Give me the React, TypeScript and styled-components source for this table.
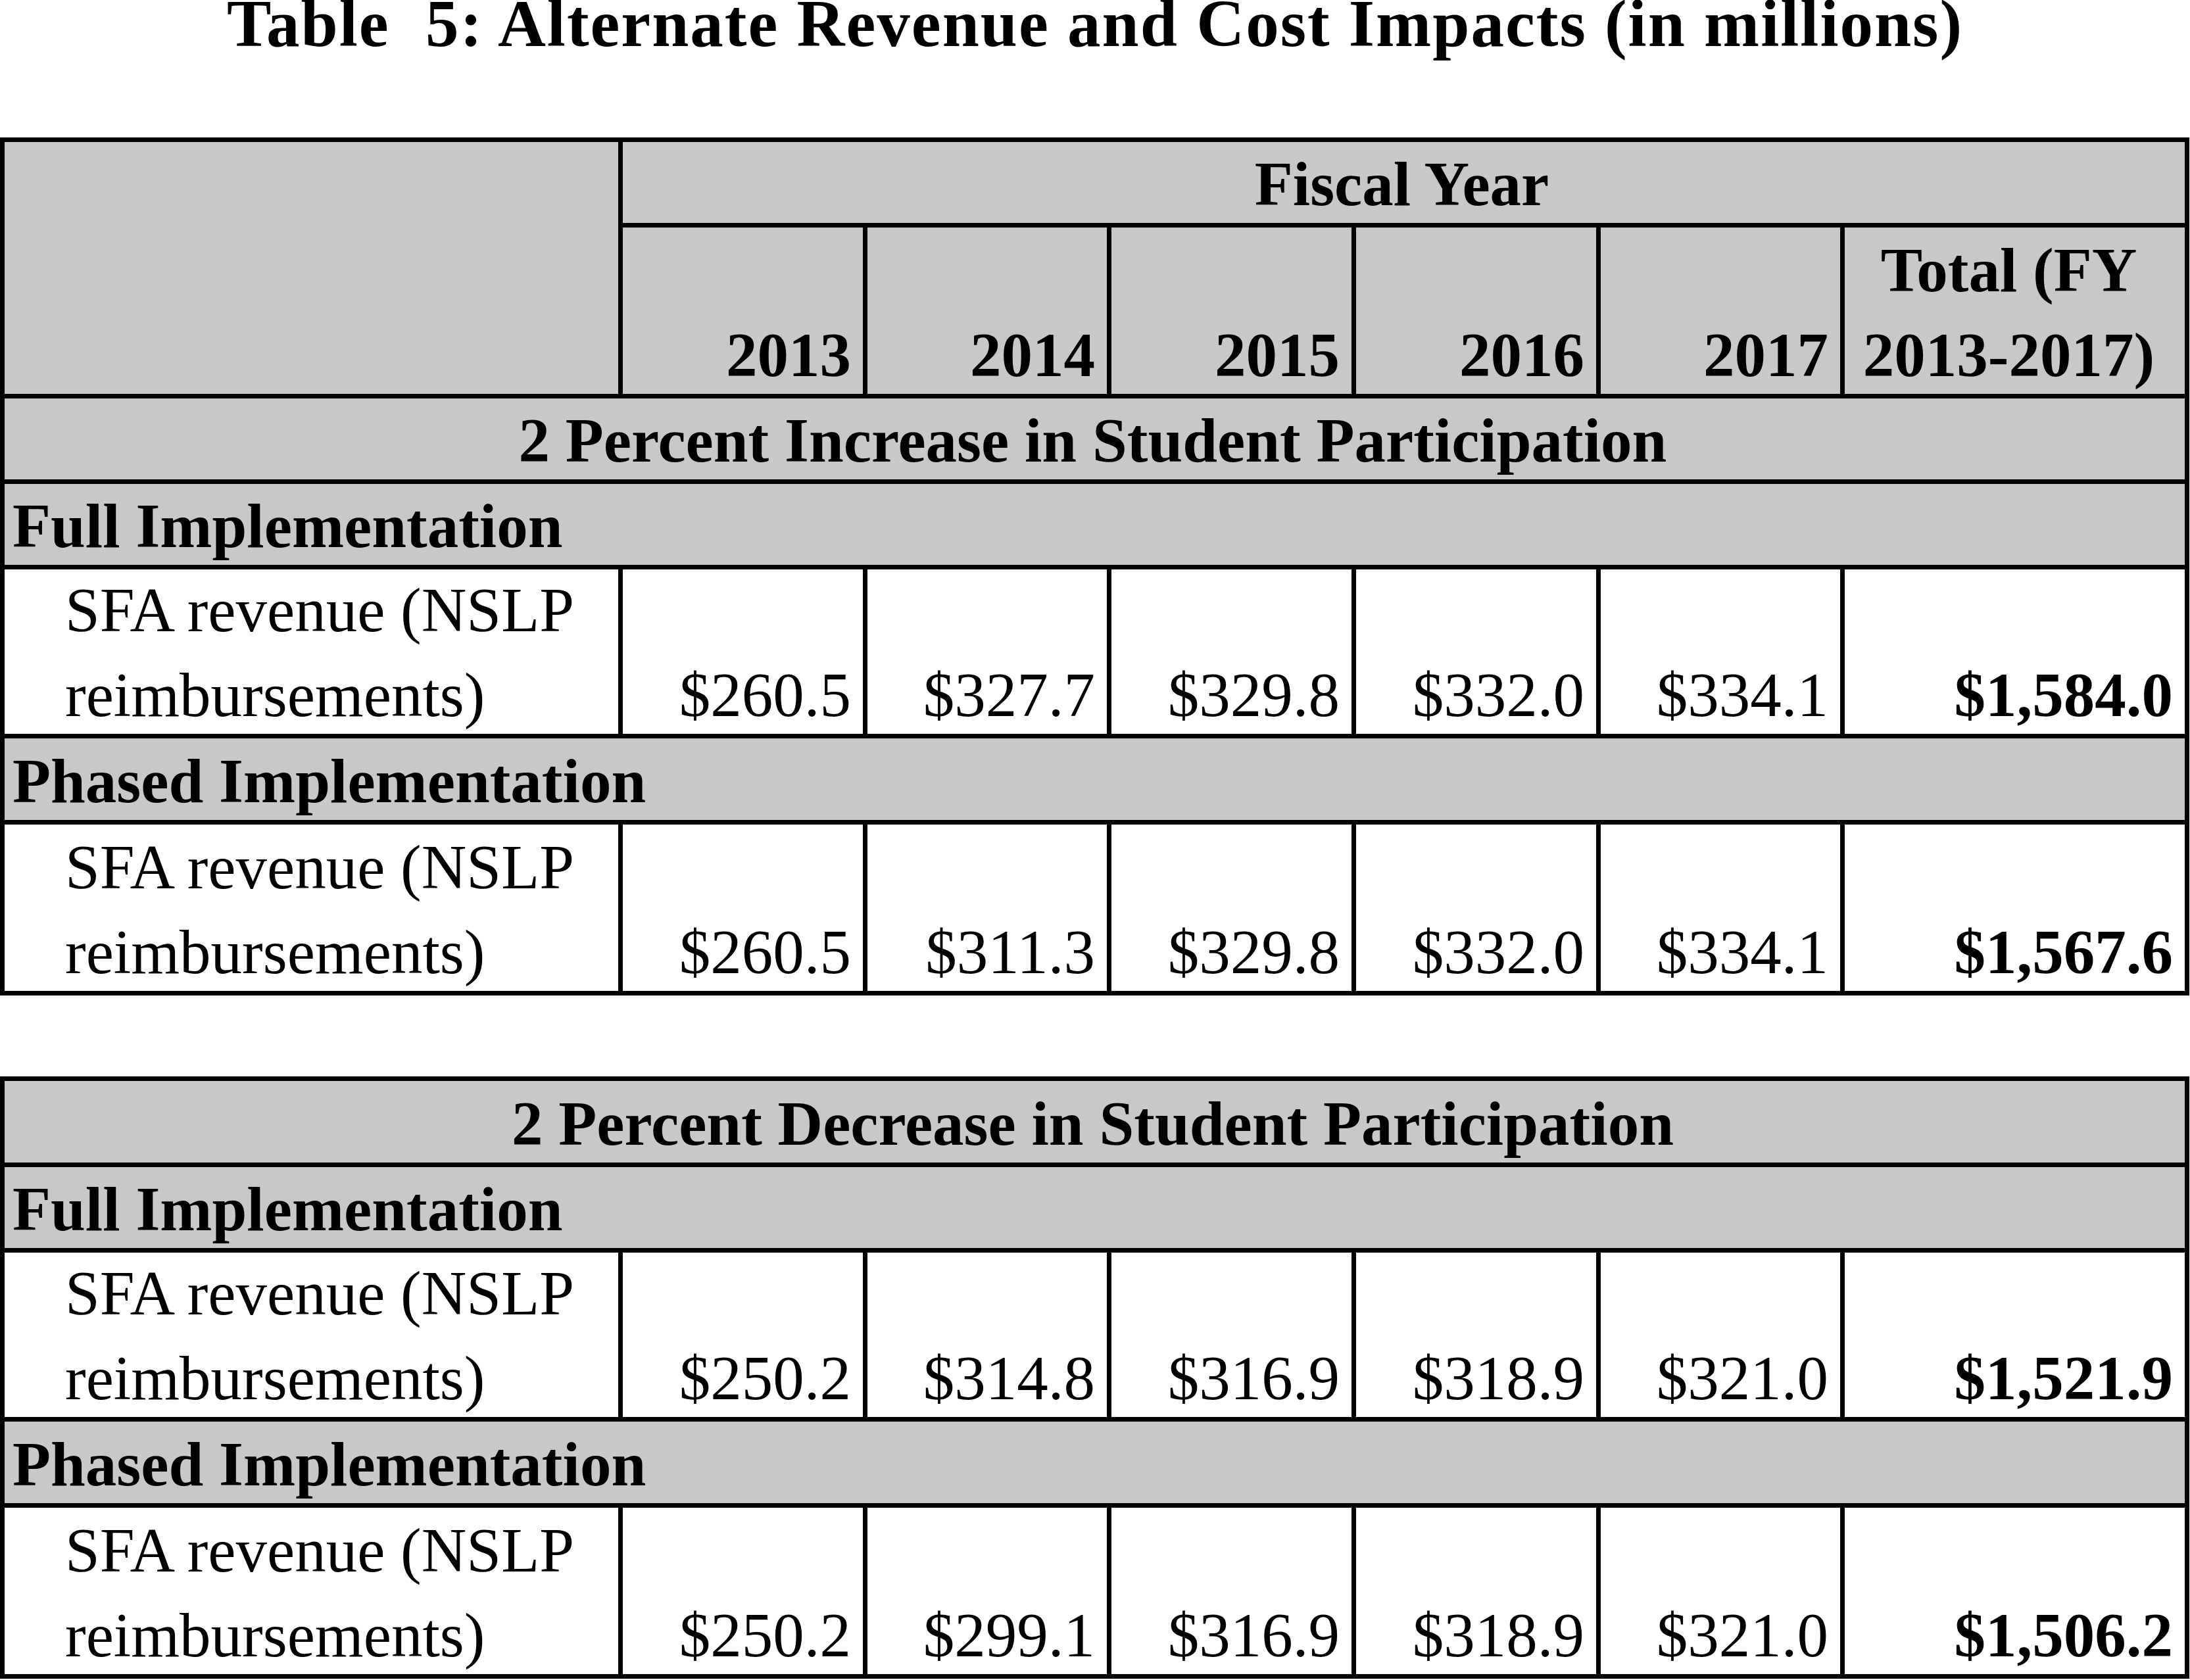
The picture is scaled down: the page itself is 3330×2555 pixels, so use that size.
import React from "react";
import styled, { createGlobalStyle } from "styled-components";

const GlobalStyle = createGlobalStyle`
  html, body {
    margin: 0;
    padding: 0;
    background: #ffffff;
  }
  body {
    font-family: "Liberation Serif", "Times New Roman", serif;
    color: #000000;
  }
`;

const GRAY = "#c8c8c8";
const LINE = "7px solid #000";

const Page = styled.main`
  width: 3330px;
  display: flex;
  flex-direction: column;
  align-items: flex-start;
`;

const Title = styled.h1`
  align-self: stretch;
  margin: 0;
  font-family: "Liberation Serif", "Times New Roman", serif;
  font-weight: 700;
  font-size: 101px;
  line-height: 72px;
  letter-spacing: 2px;
  text-align: center;
  white-space: pre;
`;

const DataTable = styled.table<{ $top: number }>`
  margin-top: ${(p) => p.$top}px;
  width: 3329px;
  table-layout: fixed;
  border-collapse: separate;
  border-spacing: 0;
  border-left: ${LINE};
  border-top: ${LINE};
  font-family: "Liberation Serif", "Times New Roman", serif;
  font-size: 95px;
`;

const Row = styled.tr<{ $h: number }>`
  height: ${(p) => p.$h}px;
`;

type Align = "left" | "right" | "center";

const Cell = styled.td<{
  $gray?: boolean;
  $align?: Align;
  $bold?: boolean;
  $indent?: number;
}>`
  box-sizing: border-box;
  padding: 0 18px 0 ${(p) => p.$indent ?? 12}px;
  border-right: ${LINE};
  border-bottom: ${LINE};
  background: ${(p) => (p.$gray ? GRAY : "#ffffff")};
  text-align: ${(p) => p.$align ?? "left"};
  font-weight: ${(p) => (p.$bold ? 700 : 400)};
  vertical-align: bottom;
  white-space: nowrap;
  overflow: visible;
`;

const Lines = styled.div`
  line-height: 129px;
  margin: -6px 0;
`;

interface Group {
  label: string;
  values: string[];
  total: string;
}

interface Scenario {
  heading: string;
  groups: Group[];
}

const widths = [940, 372, 371, 372, 372, 371, 524];
const years = ["2013", "2014", "2015", "2016", "2017"];

const increase: Scenario = {
  heading: "2 Percent Increase in Student Participation",
  groups: [
    {
      label: "Full Implementation",
      values: ["$260.5", "$327.7", "$329.8", "$332.0", "$334.1"],
      total: "$1,584.0",
    },
    {
      label: "Phased Implementation",
      values: ["$260.5", "$311.3", "$329.8", "$332.0", "$334.1"],
      total: "$1,567.6",
    },
  ],
};

const decrease: Scenario = {
  heading: "2 Percent Decrease in Student Participation",
  groups: [
    {
      label: "Full Implementation",
      values: ["$250.2", "$314.8", "$316.9", "$318.9", "$321.0"],
      total: "$1,521.9",
    },
    {
      label: "Phased Implementation",
      values: ["$250.2", "$299.1", "$316.9", "$318.9", "$321.0"],
      total: "$1,506.2",
    },
  ],
};

const Columns = () => (
  <colgroup>
    {widths.map((w, i) => (
      <col key={i} style={{ width: w }} />
    ))}
  </colgroup>
);

const ScenarioRows: React.FC<{ scenario: Scenario; first: number }> = ({
  scenario,
  first,
}) => (
  <>
    <Row $h={first}>
      <Cell colSpan={7} $gray $bold $align="center">
        <Lines>{scenario.heading}</Lines>
      </Cell>
    </Row>
    {scenario.groups.map((g, gi) => (
      <React.Fragment key={g.label}>
        <Row $h={gi === 0 ? 130 : 131}>
          <Cell colSpan={7} $gray $bold>
            <Lines>{g.label}</Lines>
          </Cell>
        </Row>
        <Row $h={gi === 0 ? 257 : 260}>
          <Cell $indent={92}>
            <Lines>
              SFA revenue (NSLP
              <br />
              reimbursements)
            </Lines>
          </Cell>
          {g.values.map((v, vi) => (
            <Cell key={vi} $align="right" $indent={0}>
              <Lines>{v}</Lines>
            </Cell>
          ))}
          <Cell $align="right" $bold $indent={0}>
            <Lines>{g.total}</Lines>
          </Cell>
        </Row>
      </React.Fragment>
    ))}
  </>
);

export default function App() {
  return (
    <>
      <GlobalStyle />
      <Page>
        <Title>{"Table  5: Alternate Revenue and Cost Impacts (in millions)"}</Title>
        <DataTable $top={137}>
          <Columns />
          <thead>
            <Row $h={130}>
              <Cell rowSpan={2} $gray />
              <Cell colSpan={6} $gray $bold $align="center">
                <Lines>Fiscal Year</Lines>
              </Cell>
            </Row>
            <Row $h={260}>
              {years.map((y) => (
                <Cell key={y} $gray $bold $align="right" $indent={0}>
                  <Lines>{y}</Lines>
                </Cell>
              ))}
              <Cell $gray $bold $align="center" $indent={0}>
                <Lines>
                  Total (FY
                  <br />
                  2013-2017)
                </Lines>
              </Cell>
            </Row>
          </thead>
          <tbody>
            <ScenarioRows scenario={increase} first={130} />
          </tbody>
        </DataTable>
        <DataTable $top={123}>
          <Columns />
          <tbody>
            <ScenarioRows scenario={decrease} first={131} />
          </tbody>
        </DataTable>
      </Page>
    </>
  );
}
